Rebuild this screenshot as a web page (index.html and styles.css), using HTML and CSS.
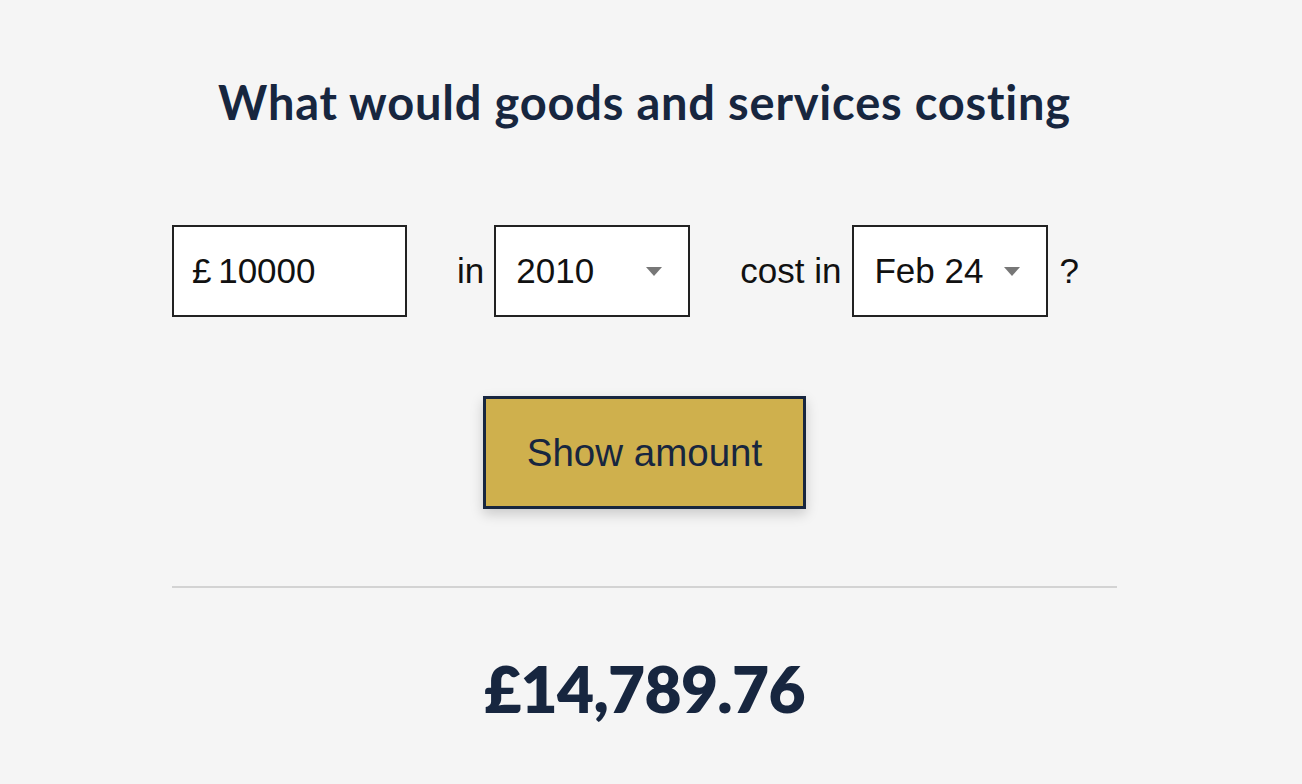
FILE: index.html
```html
<!DOCTYPE html>
<html lang="en">
<head>
<meta charset="utf-8">
<title>Inflation calculator</title>
<link rel="stylesheet" href="styles.css">
</head>
<body>
<main class="calc">
  <h1 class="calc-title">What would goods and services costing</h1>
  <div class="calc-form">
    <div class="field field-amount"><span class="amount">£ 10000</span></div>
    <span class="label label-in">in</span>
    <div class="field field-select field-year"><span>2010</span><span class="arrow"></span></div>
    <span class="label label-cost">cost in</span>
    <div class="field field-select field-month"><span>Feb 24</span><span class="arrow"></span></div>
    <span class="label label-q">?</span>
  </div>
  <div class="calc-actions">
    <button class="btn-show" type="button">Show amount</button>
  </div>
  <hr class="divider">
  <p class="result">£14,789.76</p>
</main>
</body>
</html>
```

FILE: styles.css
```css
html, body {
  margin: 0;
  padding: 0;
  background: #f5f5f5;
}
body {
  padding-right: 13px;
}
.calc {
  width: 945px;
  margin: 0 auto;
  padding-top: 72px;
}
.calc-title {
  margin: 0;
  text-align: center;
  font-family: Lato, "Noto Sans", sans-serif;
  font-weight: 700;
  font-size: 47px;
  line-height: 60px;
  color: #17263f;
  letter-spacing: 0.8px;
}
.calc-form {
  display: flex;
  align-items: center;
  margin-top: 93px;
  font-family: "Liberation Sans", Arial, sans-serif;
  font-size: 35px;
  color: #111;
}
.field {
  box-sizing: border-box;
  height: 92px;
  border: 2px solid #222;
  background: #fff;
  display: flex;
  align-items: center;
}
.field-amount {
  width: 235px;
  padding-left: 18px;
}
.amount {
  word-spacing: -3px;
}
.field-select {
  justify-content: space-between;
  padding-left: 20px;
  padding-right: 26px;
}
.field-year { width: 196px; }
.field-month { width: 196px; }
.arrow {
  width: 0;
  height: 0;
  border-left: 8px solid transparent;
  border-right: 8px solid transparent;
  border-top: 9px solid #777;
}
.label-in { margin-left: 50px; margin-right: 10px; }
.label-cost { margin-left: 50px; margin-right: 11px; }
.label-q { margin-left: 11px; }
.calc-actions {
  display: flex;
  justify-content: center;
  margin-top: 79px;
}
.btn-show {
  box-sizing: border-box;
  width: 323px;
  height: 113px;
  border: 3px solid #17263f;
  background: #cfb04d;
  color: #17263f;
  font-family: "Liberation Sans", Arial, sans-serif;
  font-size: 38.5px;
  box-shadow: 0 5px 12px rgba(0, 0, 0, 0.18);
  cursor: pointer;
}
.divider {
  margin: 77px 0 0;
  border: 0;
  height: 2px;
  background: #d3d3d3;
}
.result {
  margin: 61px 0 0;
  text-align: center;
  font-family: Lato, "Noto Sans", sans-serif;
  font-weight: 800;
  font-size: 64px;
  line-height: 80px;
  letter-spacing: -0.7px;
  color: #17263f;
}
```
